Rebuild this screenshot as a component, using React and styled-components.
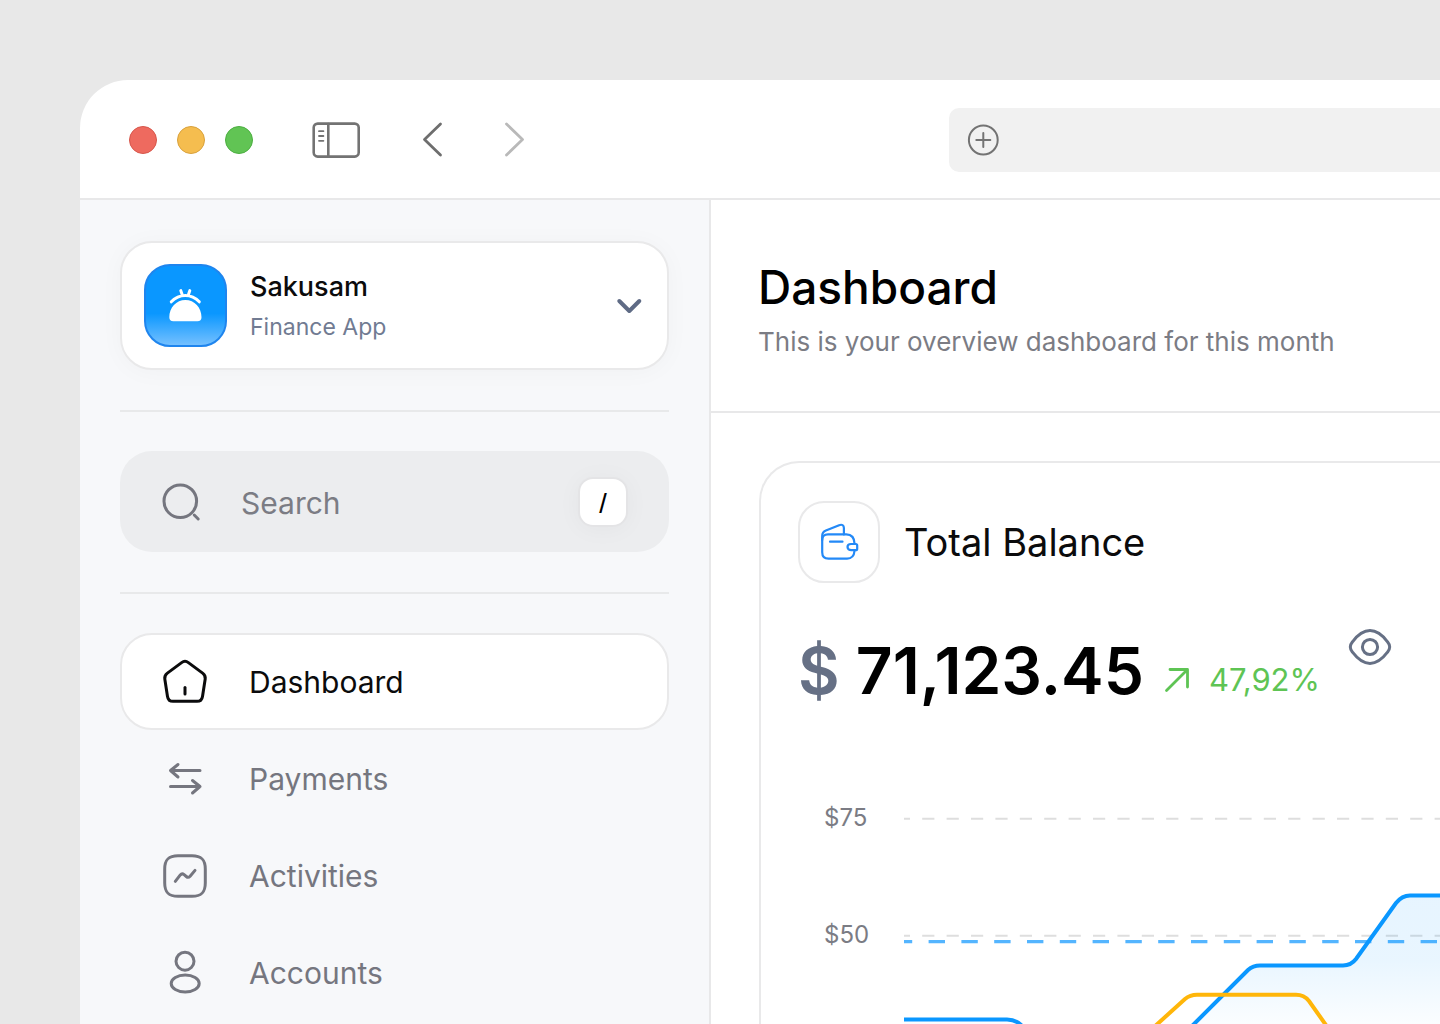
import React, { useState } from 'react';
import styled, { createGlobalStyle } from 'styled-components';

const navItems = [
    { label: 'Dashboard', icon: 'home' },
    { label: 'Payments', icon: 'transfer' },
    { label: 'Activities', icon: 'activity' },
    { label: 'Accounts', icon: 'user' },
];

const icons = {
    home: (
        <>
            <path d="M20.6 4.6c2-1.5 4.8-1.5 6.8 0l14.2 10.5c2.1 1.5 3 3.4 2.6 6l-2.7 17.3c-.5 3.2-2.4 4.9-5.5 4.9H12c-3.1 0-5-1.7-5.5-4.9L3.8 21.1c-.4-2.6.5-4.5 2.6-6L20.6 4.6Z" />
            <path d="M24 29.5v6.5" />
        </>
    ),
    transfer: (
        <>
            <path d="M39 15.5H9.5M17 9.5l-7.5 6 7.5 6.5" />
            <path d="M9.5 31.5H39M31.5 25.5l7.5 6-7.5 6.5" />
        </>
    ),
    activity: (
        <>
            <path d="M17 3.7h14c9.5 0 13.300 3.800 13.300 13.300v14c0 9.500-3.800 13.300-13.300 13.300H17C7.500 44.300 3.700 40.500 3.700 31V17C3.700 7.500 7.500 3.700 17 3.700Z" />
            <path d="m14.3 29.3 5-6.4c1.2-1.4 2.4-1.4 3.8-.3l2.2 1.9c1.4 1.2 2.6 1 3.8-.3l4.9-5.8" />
        </>
    ),
    user: (
        <>
            <circle cx="24" cy="12.2" r="9" />
            <ellipse cx="24.2" cy="34.5" rx="14" ry="8.5" />
        </>
    ),
    search: (
        <>
            <circle cx="19.3" cy="23.2" r="16.3" />
            <path d="m33.2 37 4 4" />
        </>
    ),
};

export const Logo = () => (
    <LogoBox>
        <svg width="36" height="36" viewBox="24 25 36 36" fill="none" stroke="#fff" strokeWidth="3" strokeLinecap="round">
            <path d="M27.3 38.8c8-8.4 20-8.4 28 0M36.8 27.6l1.4 4.2M45.8 27.6l-1.4 4.2" />
            <path
                d="M25.3 54.2C25.3 44.5 32.3 37 41.4 37s16.1 7.5 16.1 17.2c0 2.6-1.4 4.1-4.1 4.1h-24c-2.7 0-4.1-1.5-4.1-4.1Z"
                fill="#fff"
                stroke="none"
            />
        </svg>
    </LogoBox>
);

export const Toolbar = () => (
    <Bar>
        <Controls>
            <Lights>
                <Light $color="#ee6a5f" $edge="#d6564b" aria-label="Close" />
                <Light $color="#f5bd4f" $edge="#d8a13c" aria-label="Minimize" />
                <Light $color="#61c454" $edge="#4cae41" aria-label="Zoom" />
            </Lights>
            <IconButton aria-label="Toggle sidebar">
                <svg width="48" height="36" viewBox="0 0 48 36" fill="none" stroke="#737373" strokeWidth="2.6" strokeLinecap="round">
                    <rect x="1.7" y="1.6" width="45" height="33" rx="4" />
                    <path d="M16.3 2v32" />
                    <path d="M7 9.2h4.4M7 14h4.4M7 18.8h4.4" strokeWidth="1.8" />
                </svg>
            </IconButton>
            <History>
                <IconButton aria-label="Back">
                    <svg width="24" height="38" viewBox="0 0 24 38" fill="none" stroke="#6e6e6e" strokeWidth="2.8" strokeLinecap="round" strokeLinejoin="round">
                        <path d="M21.500 3 5.500 18.500l16 15.500" />
                    </svg>
                </IconButton>
                <IconButton aria-label="Forward">
                    <svg width="24" height="38" viewBox="0 0 24 38" fill="none" stroke="#b9b9b9" strokeWidth="2.8" strokeLinecap="round" strokeLinejoin="round">
                        <path d="m5.500 3 16 15.500L5.500 34" />
                    </svg>
                </IconButton>
            </History>
        </Controls>
        <Address>
            <IconButton aria-label="Add">
                <svg width="32" height="32" viewBox="0 0 32 32" fill="none" stroke="#737373" strokeWidth="2" strokeLinecap="round">
                    <circle cx="16.3" cy="16" r="14.4" />
                    <path d="M16.3 9v14M9.3 16h14" />
                </svg>
            </IconButton>
            <AddressInput type="text" aria-label="Address" />
        </Address>
    </Bar>
);

export const Sidebar = ({ active, onSelect }) => (
    <Side>
        <Workspace>
            <Logo />
            <WorkspaceText>
                <WorkspaceName>Sakusam</WorkspaceName>
                <WorkspaceType>Finance App</WorkspaceType>
            </WorkspaceText>
            <svg width="28" height="28" viewBox="0 0 28 28" fill="none" stroke="#5f6b85" strokeWidth="4" strokeLinecap="round" strokeLinejoin="round">
                <path d="m4.3 9 10 10 10-10" />
            </svg>
        </Workspace>
        <Divider />
        <SearchBox>
            <LineIcon viewBox="0 0 48 48">{icons.search}</LineIcon>
            <SearchInput type="search" placeholder="Search" aria-label="Search" />
            <Key>/</Key>
        </SearchBox>
        <Divider />
        <nav>
            {navItems.map(({ label, icon }) => (
                <NavItem
                    key={label}
                    href="#"
                    $active={label === active}
                    onClick={(e) => {
                        e.preventDefault();
                        onSelect(label);
                    }}
                >
                    <LineIcon viewBox="0 0 48 48">{icons[icon]}</LineIcon>
                    {label}
                </NavItem>
            ))}
        </nav>
    </Side>
);

const incomeLine =
    'M0 219.5H103C109 219.5 113 221 117 225L142 252Q148 258 156 258H248Q256 258 262 252L344 170Q349 165.5 356 165.5H439Q447 165.5 452 159L492 103Q498 95.5 506 95.5H2400';

export const Chart = () => (
    <ChartRow>
        <Scale>
            <span>$75</span>
            <span>$50</span>
        </Scale>
        <Plot fill="none">
            <defs>
                <linearGradient id="income" gradientUnits="userSpaceOnUse" x1="0" y1="95" x2="0" y2="240">
                    <stop offset="0" stopColor="#0a97ff" stopOpacity="0.1" />
                    <stop offset="0.45" stopColor="#0a97ff" stopOpacity="0.09" />
                    <stop offset="1" stopColor="#0a97ff" stopOpacity="0" />
                </linearGradient>
            </defs>
            <g stroke="#dedede" strokeWidth="2" strokeDasharray="12.2 12.2" strokeDashoffset="6.2">
                <path d="M0 18.7H2400M0 135.7H2400" />
            </g>
            <path d="M0 141.6H2400" stroke="#54b5ff" strokeWidth="3.4" strokeDasharray="16.4 16.4" strokeDashoffset="8.2" />
            <path d={`${incomeLine}V260H0Z`} fill="url(#income)" />
            <path d={incomeLine} stroke="#0a97ff" strokeWidth="4" />
            <path d="M228 247 281 199Q286 194.8 293 194.8H392Q400 194.8 405 201L436 245" stroke="#ffb60a" strokeWidth="4" />
        </Plot>
    </ChartRow>
);

export const BalanceCard = () => {
    const [visible, setVisible] = useState(true);

    return (
        <Card>
            <CardHead>
                <CardIcon>
                    <svg width="44" height="44" viewBox="0 0 44 44" fill="none" stroke="#2389f7" strokeWidth="2.2" strokeLinecap="round" strokeLinejoin="round">
                        <path d="M37.6 24c-.2-6.5-2.6-9.6-8.3-9.6H11c-3.7 0-5.8 2-5.8 5.4v12.5c0 4.3 2.1 6.4 6.4 6.4h18.5c4.5 0 7-2.7 7.5-8.2" />
                        <path d="M5.2 20v-4.3c0-2.7 1.2-4.2 3.7-5.2l13.2-5.3c2.9-1.1 4.8 0 4.8 2.9v6.3" />
                        <path d="M34 24h4.8c.9 0 1.4.6 1.4 1.5v3.2c0 .9-.6 1.5-1.5 1.5h-4.500c-2 0-3.700-1.300-3.700-3.100S32 24 34 24ZM13 21.700h12.500" />
                    </svg>
                </CardIcon>
                <CardTitle>Total Balance</CardTitle>
            </CardHead>
            <BalanceRow>
                <Amount>
                    <Currency>$</Currency> {visible ? '71,123.45' : '•••••'}
                </Amount>
                <Change>
                    <svg width="26" height="26" viewBox="0 0 26 26" fill="none" stroke="#5ec454" strokeWidth="2.8" strokeLinecap="round" strokeLinejoin="round">
                        <path d="M2.5 23.5 23.5 2.5M6 2.5h17.5V20" />
                    </svg>
                    47,92%
                </Change>
                <EyeButton aria-label="Toggle balance" onClick={() => setVisible(!visible)}>
                    <svg width="44" height="44" viewBox="0 0 44 44" fill="none" stroke="#667085" strokeWidth="3">
                        <path d="M2.3 22c0-2 .9-3.6 2.2-5.2C8.5 11.5 14.5 5.6 22 5.6s13.5 5.9 17.5 11.2c1.3 1.6 2.2 3.2 2.2 5.2s-.9 3.6-2.2 5.2C35.5 32.5 29.5 38.4 22 38.4S8.5 32.5 4.5 27.2C3.2 25.6 2.3 24 2.3 22Z" />
                        <circle cx="22" cy="22" r="7.6" />
                    </svg>
                </EyeButton>
            </BalanceRow>
            <Chart />
        </Card>
    );
};

const App = () => {
    const [active, setActive] = useState('Dashboard');

    return (
        <Page>
            <GlobalStyle />
            <Window>
                <Toolbar />
                <Body>
                    <Sidebar active={active} onSelect={setActive} />
                    <Main>
                        <Header>
                            <Title>Dashboard</Title>
                            <Subtitle>This is your overview dashboard for this month</Subtitle>
                        </Header>
                        <Content>
                            <BalanceCard />
                        </Content>
                    </Main>
                </Body>
            </Window>
        </Page>
    );
};

export default App;

const GlobalStyle = createGlobalStyle`
    * {
        box-sizing: border-box;
    }
    body {
        margin: 0;
        background: #e8e8e8;
        font-family: Inter, 'Liberation Sans', sans-serif;
    }
    button, input {
        font-family: inherit;
    }
    svg {
        display: block;
        flex-shrink: 0;
    }
`;

const Page = styled.div`
    display: flex;
    height: 100vh;
    padding: 80px 0 0 80px;
    overflow: hidden;
`;

const Window = styled.div`
    display: flex;
    flex-direction: column;
    flex: 1;
    min-width: 0;
    background: #fff;
    border-radius: 48px 0 0 0;
    overflow: hidden;
`;

const Bar = styled.header`
    display: grid;
    grid-template-columns: 23fr 13fr;
    align-items: center;
    padding: 28px 0 26px;
    border-bottom: 2px solid #e8e8e9;
`;

const Controls = styled.div`
    display: flex;
    align-items: center;
    gap: 59px;
    padding-left: 49px;
`;

const Lights = styled.div`
    display: flex;
    gap: 20px;
`;

const Light = styled.button`
    width: 28px;
    height: 28px;
    padding: 0;
    border: 1px solid ${(p) => p.$edge};
    border-radius: 50%;
    background: ${(p) => p.$color};
`;

const IconButton = styled.button`
    padding: 0;
    border: 0;
    background: none;
    cursor: pointer;
`;

const History = styled.div`
    display: flex;
    gap: 58px;
`;

const Address = styled.div`
    display: flex;
    align-items: center;
    gap: 16px;
    height: 64px;
    padding-left: 18px;
    border-radius: 10px 0 0 10px;
    background: #f1f1f1;
`;

const AddressInput = styled.input`
    flex: 1;
    min-width: 0;
    border: 0;
    outline: 0;
    background: none;
    font-size: 23px;
`;

const Body = styled.div`
    display: flex;
    flex: 1;
    min-height: 0;
`;

const Side = styled.aside`
    display: flex;
    flex-direction: column;
    flex-shrink: 0;
    gap: 40px;
    width: 631px;
    padding: 41px 40px 0;
    border-right: 2px solid #e8e8e9;
    background: #f7f8fa;
`;

const Divider = styled.hr`
    width: 100%;
    height: 2px;
    margin: 0 0 -1px;
    border: 0;
    background: #e8e9ea;
`;

const Workspace = styled.button`
    display: flex;
    align-items: center;
    gap: 23px;
    height: 129px;
    padding: 0 24px 0 22px;
    border: 2px solid #e9e9ea;
    border-radius: 32px;
    background: #fff;
    box-shadow: 0 2px 24px rgba(0, 0, 0, 0.03);
    text-align: left;
    cursor: pointer;
`;

const LogoBox = styled.span`
    display: flex;
    align-items: center;
    justify-content: center;
    flex-shrink: 0;
    width: 83px;
    height: 83px;
    border: 2px solid #1f85ee;
    border-radius: 26px;
    background: linear-gradient(#0a97ff 60%, #74c0ff);
`;

const WorkspaceText = styled.span`
    display: flex;
    flex-direction: column;
    flex: 1;
    gap: 6px;
    padding-top: 2px;
`;

const WorkspaceName = styled.span`
    font-size: 27px;
    font-weight: 500;
    line-height: 34px;
    color: #0b0b0c;
`;

const WorkspaceType = styled.span`
    font-size: 23px;
    line-height: 34px;
    color: #717b92;
`;

const SearchBox = styled.label`
    display: flex;
    align-items: center;
    gap: 32px;
    height: 101px;
    padding: 0 41px;
    border-radius: 32px;
    background: #ecedef;
    color: #75767f;
`;

const SearchInput = styled.input`
    flex: 1;
    min-width: 0;
    padding: 2px 0 0;
    border: 0;
    outline: 0;
    background: none;
    font-size: 30px;
    color: inherit;

    &::placeholder {
        color: #7b7c84;
        opacity: 1;
    }
`;

const Key = styled.kbd`
    width: 50px;
    height: 50px;
    border: 2px solid #e4e4e6;
    border-radius: 15px;
    background: #fff;
    box-shadow: 0 2px 24px rgba(0, 0, 0, 0.04);
    font-family: inherit;
    font-size: 23px;
    font-weight: 500;
    line-height: 48px;
    text-align: center;
    color: #000;
`;

const LineIcon = styled.svg`
    width: 48px;
    height: 48px;
    fill: none;
    stroke: currentColor;
    stroke-width: 3;
    stroke-linecap: round;
    stroke-linejoin: round;
`;

const NavItem = styled.a`
    display: flex;
    align-items: center;
    gap: 40px;
    height: 97px;
    padding-left: 39px;
    border: 2px solid ${(p) => (p.$active ? '#e9e9ea' : 'transparent')};
    border-radius: 32px;
    background: ${(p) => (p.$active ? '#fff' : 'none')};
    font-size: 30px;
    color: ${(p) => (p.$active ? '#0b0b0c' : '#75767f')};
    text-decoration: none;
`;

const Main = styled.main`
    flex: 1;
    min-width: 0;
`;

const Header = styled.div`
    padding: 59px 48px 51px 47px;
    border-bottom: 2px solid #e8e8e9;
`;

const Title = styled.h1`
    margin: 0;
    font-size: 46px;
    font-weight: 500;
    line-height: 56px;
    color: #000;
`;

const Subtitle = styled.p`
    margin: 9px 0 0;
    font-size: 26px;
    line-height: 36px;
    color: #7b7c84;
    white-space: nowrap;
`;

const Content = styled.div`
    padding: 48px 0 0 48px;
`;

const Card = styled.section`
    padding: 38px 0 0 37px;
    border: 2px solid #e9e9ea;
    border-width: 2px 0 0 2px;
    border-radius: 40px 0 0 0;
`;

const CardHead = styled.div`
    display: flex;
    align-items: center;
    gap: 24px;
`;

const CardIcon = styled.div`
    display: flex;
    align-items: center;
    justify-content: center;
    width: 82px;
    height: 82px;
    border: 2px solid #e9e9ea;
    border-radius: 26px;
`;

const CardTitle = styled.h2`
    margin: 0;
    font-size: 38px;
    font-weight: 400;
    line-height: 48px;
    color: #0b0b0c;
`;

const BalanceRow = styled.div`
    display: flex;
    align-items: center;
    margin-top: 42px;
    white-space: nowrap;
`;

const Amount = styled.div`
    font-size: 64px;
    font-weight: 600;
    line-height: 92px;
    color: #000;
`;

const Currency = styled.span`
    color: #667085;
`;

const Change = styled.div`
    display: flex;
    align-items: center;
    gap: 19px;
    margin: 18px 28px 0 20px;
    font-size: 31px;
    line-height: 40px;
    color: #5ec454;
`;

const EyeButton = styled(IconButton)`
    align-self: flex-start;
`;

const ChartRow = styled.div`
    display: flex;
    gap: 35px;
    margin-top: 83px;
    padding-left: 26px;
`;

const Scale = styled.div`
    display: flex;
    flex-direction: column;
    gap: 81px;
    width: 45px;
    font-size: 24px;
    line-height: 36px;
    color: #7b7c84;
`;

const Plot = styled.svg`
    flex: 1 1 0;
    min-width: 0;
    height: 260px;
`;
